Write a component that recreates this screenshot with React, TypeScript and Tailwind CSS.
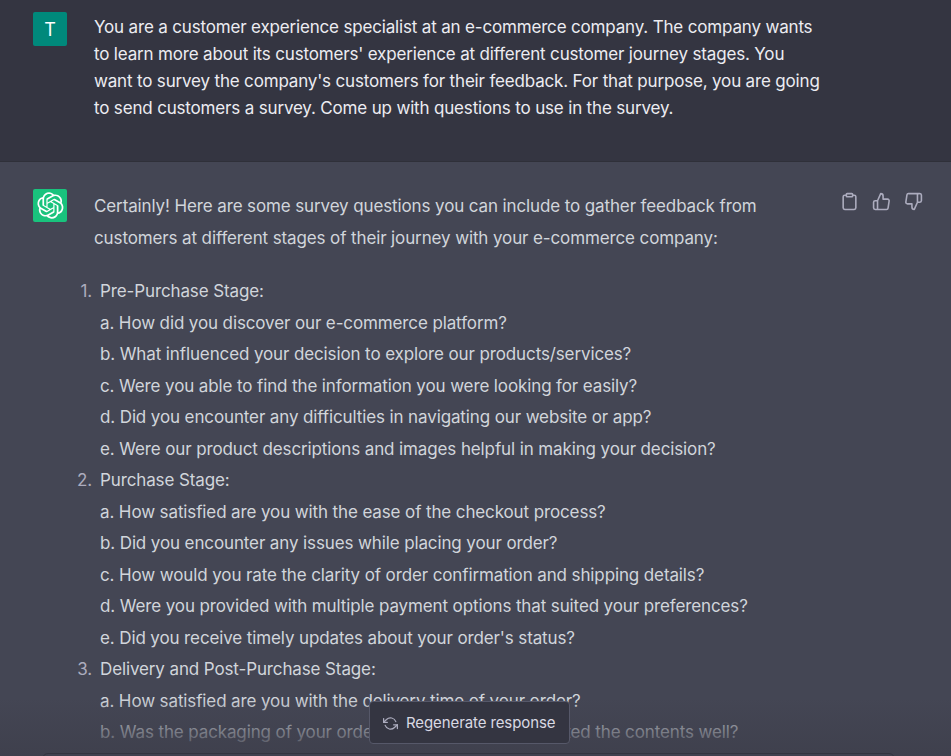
const LOGO = "M37.5324 16.8707C37.9808 15.5241 38.1363 14.0974 37.9886 12.6859C37.8409 11.2744 37.3934 9.91076 36.676 8.68622C35.6126 6.83404 33.9882 5.3676 32.0373 4.4985C30.0864 3.62941 27.9098 3.40259 25.8215 3.85078C24.8796 2.7893 23.7219 1.94125 22.4257 1.36341C21.1295 0.785575 19.7249 0.491269 18.3058 0.500197C16.1708 0.495044 14.0893 1.16803 12.3614 2.42214C10.6335 3.67624 9.34853 5.44666 8.6917 7.47815C7.30085 7.76286 5.98686 8.3414 4.8377 9.17505C3.68854 10.0087 2.73073 11.0782 2.02839 12.312C0.956464 14.1591 0.498905 16.2988 0.721698 18.4228C0.944492 20.5467 1.83612 22.5449 3.268 24.1293C2.81966 25.4759 2.66413 26.9026 2.81182 28.3141C2.95951 29.7256 3.40701 31.0892 4.12437 32.3138C5.18791 34.1659 6.8123 35.6322 8.76321 36.5013C10.7141 37.3704 12.8907 37.5973 14.9789 37.1492C15.9208 38.2107 17.0786 39.0587 18.3747 39.6366C19.6709 40.2144 21.0755 40.5087 22.4946 40.4998C24.6307 40.5054 26.7133 39.8321 28.4418 38.5772C30.1704 37.3223 31.4556 35.5506 32.1119 33.5179C33.5027 33.2332 34.8167 32.6547 35.9659 31.821C37.115 30.9874 38.0728 29.9178 38.7752 28.684C39.8458 26.8371 40.3023 24.6979 40.0789 22.5748C39.8556 20.4517 38.9639 18.4544 37.5324 16.8707ZM22.4978 37.8849C20.7443 37.8874 19.0459 37.2733 17.6994 36.1501C17.7601 36.117 17.8666 36.0586 17.936 36.0161L25.9004 31.4156C26.1003 31.3019 26.2663 31.137 26.3813 30.9378C26.4964 30.7386 26.5563 30.5124 26.5549 30.2825V19.0542L29.9213 20.998C29.9389 21.0068 29.9541 21.0198 29.9656 21.0359C29.977 21.052 29.9842 21.0707 29.9867 21.0902V30.3889C29.9842 32.375 29.1946 34.2791 27.7909 35.6841C26.3872 37.0892 24.4838 37.8806 22.4978 37.8849ZM6.39227 31.0064C5.51397 29.4888 5.19742 27.7107 5.49804 25.9832C5.55718 26.0187 5.66048 26.0818 5.73461 26.1244L13.699 30.7248C13.8975 30.8408 14.1233 30.902 14.3532 30.902C14.583 30.902 14.8088 30.8408 15.0073 30.7248L24.731 25.1103V28.9979C24.7321 29.0177 24.7283 29.0376 24.7199 29.0556C24.7115 29.0736 24.6988 29.0893 24.6829 29.1012L16.6317 33.7497C14.9096 34.7416 12.8643 35.0097 10.9447 34.4954C9.02506 33.9811 7.38785 32.7263 6.39227 31.0064ZM4.29707 13.6194C5.17156 12.0998 6.55279 10.9364 8.19885 10.3327C8.19885 10.4013 8.19491 10.5228 8.19491 10.6071V19.808C8.19351 20.0378 8.25334 20.2638 8.36823 20.4629C8.48312 20.6619 8.64893 20.8267 8.84863 20.9404L18.5723 26.5542L15.206 28.4979C15.1894 28.5089 15.1703 28.5155 15.1505 28.5173C15.1307 28.5191 15.1107 28.516 15.0924 28.5082L7.04046 23.8557C5.32135 22.8601 4.06716 21.2235 3.55289 19.3046C3.03862 17.3858 3.30624 15.3413 4.29707 13.6194ZM31.955 20.0556L22.2312 14.4411L25.5976 12.4981C25.6142 12.4872 25.6333 12.4805 25.6531 12.4787C25.6729 12.4769 25.6928 12.4801 25.7111 12.4879L33.7631 17.1364C34.9967 17.849 36.0017 18.8982 36.6606 20.1613C37.3194 21.4244 37.6047 22.849 37.4832 24.2684C37.3617 25.6878 36.8382 27.0432 35.9743 28.1759C35.1103 29.3086 33.9415 30.1717 32.6047 30.6641C32.6047 30.5947 32.6047 30.4733 32.6047 30.3889V21.188C32.6066 20.9586 32.5474 20.7328 32.4332 20.5338C32.319 20.3348 32.154 20.1698 31.955 20.0556ZM35.3055 15.0128C35.2464 14.9765 35.1431 14.9142 35.069 14.8717L27.1045 10.2712C26.906 10.1554 26.6803 10.0943 26.4504 10.0943C26.2206 10.0943 25.9948 10.1554 25.7963 10.2712L16.0726 15.8858V11.9982C16.0715 11.9783 16.0753 11.9585 16.0837 11.9405C16.0921 11.9225 16.1048 11.9068 16.1207 11.8949L24.1719 7.25025C25.4053 6.53903 26.8158 6.19376 28.2383 6.25482C29.6608 6.31589 31.0364 6.78077 32.2044 7.59508C33.3723 8.40939 34.2842 9.53945 34.8334 10.8531C35.3826 12.1667 35.5464 13.6095 35.3055 15.0128ZM14.2424 21.9419L10.8752 19.9981C10.8576 19.9893 10.8423 19.9763 10.8309 19.9602C10.8195 19.9441 10.8122 19.9254 10.8098 19.9058V10.6071C10.8107 9.18295 11.2173 7.78848 11.9819 6.58696C12.7466 5.38544 13.8377 4.42659 15.1275 3.82264C16.4173 3.21869 17.8524 2.99464 19.2649 3.1767C20.6775 3.35876 22.0089 3.93941 23.1034 4.85067C23.0427 4.88379 22.937 4.94215 22.8668 4.98473L14.9024 9.58517C14.7025 9.69878 14.5366 9.86356 14.4215 10.0626C14.3065 10.2616 14.2466 10.4877 14.2479 10.7175L14.2424 21.9419ZM16.071 17.9991L20.4018 15.4978L24.7325 17.9975V22.9985L20.4018 25.4983L16.071 22.9985V17.9991Z";

const sections: { n: number; title: string; items: string[] }[] = [
  {
    n: 1,
    title: "Pre-Purchase Stage:",
    items: [
      "a. How did you discover our e-commerce platform?",
      "b. What influenced your decision to explore our products/services?",
      "c. Were you able to find the information you were looking for easily?",
      "d. Did you encounter any difficulties in navigating our website or app?",
      "e. Were our product descriptions and images helpful in making your decision?",
    ],
  },
  {
    n: 2,
    title: "Purchase Stage:",
    items: [
      "a. How satisfied are you with the ease of the checkout process?",
      "b. Did you encounter any issues while placing your order?",
      "c. How would you rate the clarity of order confirmation and shipping details?",
      "d. Were you provided with multiple payment options that suited your preferences?",
      "e. Did you receive timely updates about your order's status?",
    ],
  },
  {
    n: 3,
    title: "Delivery and Post-Purchase Stage:",
    items: [
      "a. How satisfied are you with the delivery time of your order?",
      "b. Was the packaging of your order secure and so it protected the contents well?",
    ],
  },
];

export default function App() {
  return (
    <div className="relative h-[756px] w-full overflow-hidden bg-[#444654] font-['Inter','Liberation_Sans',sans-serif]">
      <section className="flex h-[162px] gap-[27px] border-b border-[#2f3039] bg-[#343541] pl-[33px] pt-[12px]">
        <div className="flex h-[34px] w-[34px] shrink-0 items-center justify-center rounded-[2px] bg-[#00897b] text-[18px] text-white">
          T
        </div>
        <p className="mt-[2px] w-[800px] text-[17px] leading-[27px] tracking-[-0.17px] text-[#ececf1]">
          You are a customer experience specialist at an e-commerce company. The company wants
          <br />
          to learn more about its customers' experience at different customer journey stages. You
          <br />
          want to survey the company's customers for their feedback. For that purpose, you are going
          <br />
          to send customers a survey. Come up with questions to use in the survey.
        </p>
      </section>

      <section className="flex gap-[27px] pl-[33px] pt-[27px]">
        <div className="flex h-[33px] w-[34px] shrink-0 items-center justify-center rounded-[2px] bg-[#19c37d] text-white">
          <svg viewBox="0 0 41 41" className="h-[27px] w-[27px]" fill="currentColor">
            <path d={LOGO} />
          </svg>
        </div>
        <div className="mt-[2px] w-[800px] text-[17px] leading-[31.5px] tracking-[-0.12px] text-[#d1d5db]">
          <p>
            Certainly! Here are some survey questions you can include to gather feedback from
            <br />
            customers at different stages of their journey with your e-commerce company:
          </p>
          <div className="-ml-[21px] mt-[22px]">
            {sections.map((s) => (
              <div key={s.n}>
                <div className="flex gap-[8px]">
                  <span className="w-[19px] text-right text-[#acacbe]">{s.n}.</span>
                  <span>{s.title}</span>
                </div>
                {s.items.map((t) => (
                  <div key={t} className="pl-[27px]">
                    {t}
                  </div>
                ))}
              </div>
            ))}
          </div>
        </div>
        <div className="absolute right-[28px] top-[192px] flex gap-[13px] text-[#acacbe]">
          <svg viewBox="0 0 24 24" className="h-[19px] w-[19px]" fill="none" stroke="currentColor" strokeWidth="2" strokeLinecap="round" strokeLinejoin="round">
            <path d="M16 4h2a2 2 0 0 1 2 2v14a2 2 0 0 1-2 2H6a2 2 0 0 1-2-2V6a2 2 0 0 1 2-2h2" />
            <rect x="8" y="2" width="8" height="4" rx="1" ry="1" />
          </svg>
          <svg viewBox="0 0 24 24" className="h-[19px] w-[19px]" fill="none" stroke="currentColor" strokeWidth="2" strokeLinecap="round" strokeLinejoin="round">
            <path d="M14 9V5a3 3 0 0 0-3-3l-4 9v11h11.28a2 2 0 0 0 2-1.7l1.38-9a2 2 0 0 0-2-2.3zM7 22H4a2 2 0 0 1-2-2v-7a2 2 0 0 1 2-2h3" />
          </svg>
          <svg viewBox="0 0 24 24" className="h-[19px] w-[19px]" fill="none" stroke="currentColor" strokeWidth="2" strokeLinecap="round" strokeLinejoin="round">
            <path d="M10 15v4a3 3 0 0 0 3 3l4-9V2H5.72a2 2 0 0 0-2 1.7l-1.38 9a2 2 0 0 0 2 2.3zm7-13h2.67A2.31 2.31 0 0 1 22 4v7a2.31 2.31 0 0 1-2.33 2H17" />
          </svg>
        </div>
      </section>

      <div className="absolute inset-x-0 bottom-0 h-[58px] bg-gradient-to-b from-[#40414e00] to-[#3f404d]" />

      <div className="absolute left-[42px] right-[56px] top-[753px] h-[40px] rounded-md border border-[#33343f] bg-[#40414f]" />

      <div className="absolute left-[369px] top-[701px] flex h-[43px] w-[201px] items-center gap-[8px] rounded-[4px] border border-[#565869] bg-[#343541] pl-[13px] pt-px text-[15px] tracking-[-0.1px] text-[#d9d9e3]">
        <svg viewBox="0 0 24 24" className="h-[15px] w-[15px] text-[#acacbe]" fill="none" stroke="currentColor" strokeWidth="2" strokeLinecap="round" strokeLinejoin="round">
          <polyline points="1 4 1 10 7 10" />
          <polyline points="23 20 23 14 17 14" />
          <path d="M20.49 9A9 9 0 0 0 5.64 5.64L1 10m22 4l-4.64 4.36A9 9 0 0 1 3.51 15" />
        </svg>
        <span>Regenerate response</span>
      </div>
    </div>
  );
}
